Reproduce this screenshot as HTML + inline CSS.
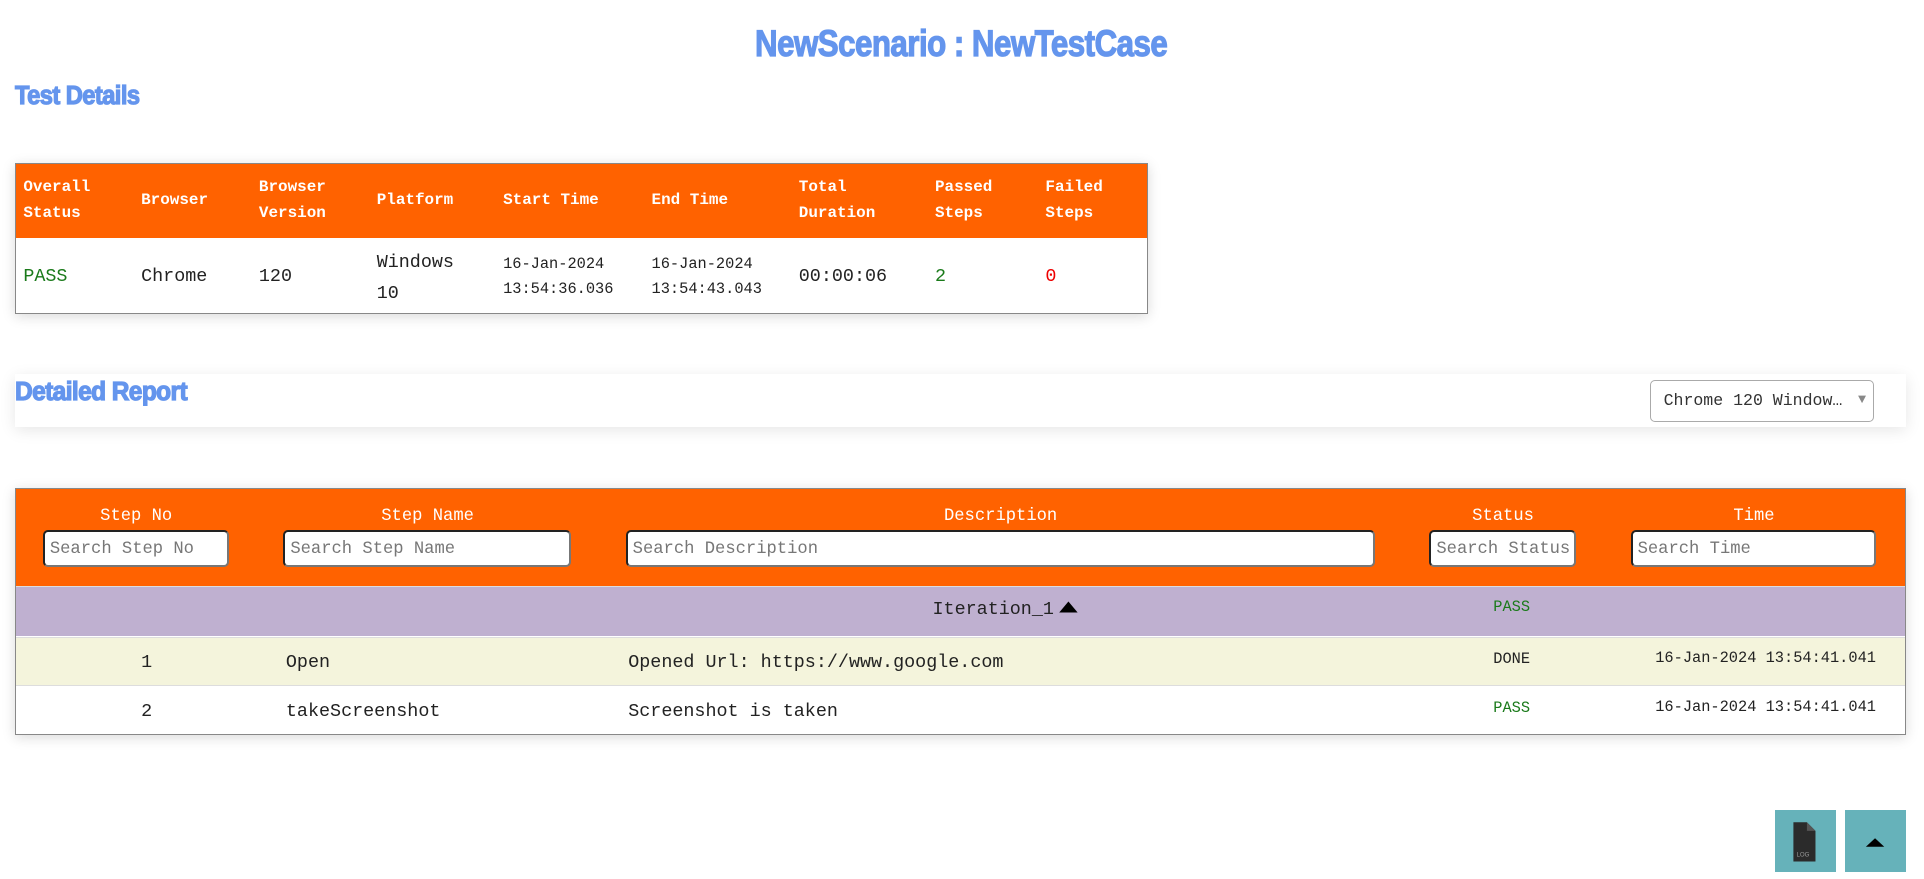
<!DOCTYPE html>
<html><head><meta charset="utf-8"><style>
html,body{margin:0;padding:0;background:#fff;overflow:hidden}
body{width:1924px;height:879px}
#w{zoom:1.2270;width:1568px;height:716px;position:relative;font-family:"Liberation Mono",monospace;color:#222}
.a{position:absolute;white-space:nowrap}
.h{font-family:"Liberation Sans",sans-serif;font-weight:bold;color:#6495ED;transform-origin:left top;letter-spacing:-0.5px;-webkit-text-stroke:1px #6495ED}
.or{background:#FF6200}
.th{color:#fff;font-weight:bold;font-size:13px;line-height:21px}
.td{font-size:15px}
.sm{font-size:12.5px;line-height:21px}
.inp{position:absolute;top:432px;height:27px;background:#fff;border:2px solid #222;border-right-color:#777;border-bottom-color:#777;border-radius:4px;font-size:14px;color:#777;line-height:29px;padding-left:4px;box-sizing:content-box}
.lbl{position:absolute;top:413px;color:#fff;font-size:14px;text-align:center}
.btn{position:absolute;top:660px;width:49px;height:51px;background:#66B2BA}
</style></head><body><div id="w">
<div class="a h" style="left:615px;top:19px;font-size:30px;transform:scaleX(0.85)">NewScenario : NewTestCase</div>
<div class="a h" style="left:12px;top:67px;font-size:21px;transform:scaleX(0.92)">Test Details</div>

<div class="a" style="left:12px;top:133px;width:922px;height:121px;border:1px solid #888;box-shadow:0 2px 10px rgba(0,0,0,.15)">
 <div class="or" style="position:absolute;left:0;top:0;width:922px;height:60px"></div>
</div>
<div class="a th" style="left:19px;top:143px">Overall<br>Status</div>
<div class="a th" style="left:115px;top:153px">Browser</div>
<div class="a th" style="left:211px;top:143px">Browser<br>Version</div>
<div class="a th" style="left:307px;top:153px">Platform</div>
<div class="a th" style="left:410px;top:153px">Start Time</div>
<div class="a th" style="left:531px;top:153px">End Time</div>
<div class="a th" style="left:651px;top:143px">Total<br>Duration</div>
<div class="a th" style="left:762px;top:143px">Passed<br>Steps</div>
<div class="a th" style="left:852px;top:143px">Failed<br>Steps</div>
<div class="a td" style="left:19px;top:217px;color:#1a7a1a">PASS</div>
<div class="a td" style="left:115px;top:217px">Chrome</div>
<div class="a td" style="left:211px;top:217px">120</div>
<div class="a td" style="left:307px;top:202px;line-height:25px">Windows<br>10</div>
<div class="a sm" style="left:410px;top:205px">16-Jan-2024<br>13:54:36.036</div>
<div class="a sm" style="left:531px;top:205px">16-Jan-2024<br>13:54:43.043</div>
<div class="a td" style="left:651px;top:217px">00:00:06</div>
<div class="a td" style="left:762px;top:217px;color:#1a7a1a">2</div>
<div class="a td" style="left:852px;top:217px;color:#e00">0</div>

<div class="a" style="left:12px;top:305px;width:1541px;height:43px;background:#fff;box-shadow:0 3px 12px rgba(0,0,0,.1)"></div>
<div class="a h" style="left:12px;top:308px;font-size:21px;transform:scaleX(0.95)">Detailed Report</div>
<div class="a" style="left:1345px;top:310px;width:181px;height:32px;border:1px solid #aaa;border-radius:4px;background:#fff;font-size:13.5px;line-height:32px;color:#333"><span style="margin-left:10px">Chrome 120 Window…</span><span style="position:absolute;right:6px;top:0;color:#888;font-size:11px">▼</span></div>

<div class="a" style="left:12px;top:398px;width:1540px;height:199px;border:1px solid #888;box-shadow:0 2px 10px rgba(0,0,0,.15)">
 <div class="or" style="position:absolute;left:0;top:0;width:1540px;height:79px"></div>
 <div style="position:absolute;left:0;top:79px;width:1540px;height:40px;background:#BFB0D0;border-top:1px solid #ddd"></div>
 <div style="position:absolute;left:0;top:120px;width:1540px;height:39px;background:#F4F4DC;border-top:1px solid #ddd;border-bottom:1px solid #ddd"></div>
</div>
<div class="lbl" style="left:36px;width:150px">Step No</div>
<div class="lbl" style="left:232px;width:233px">Step Name</div>
<div class="lbl" style="left:511px;width:609px">Description</div>
<div class="lbl" style="left:1166px;width:118px">Status</div>
<div class="lbl" style="left:1330px;width:199px">Time</div>
<div class="inp" style="left:35px;width:144px">Search Step No</div>
<div class="inp" style="left:231px;width:227px">Search Step Name</div>
<div class="inp" style="left:510px;width:603px">Search Description</div>
<div class="inp" style="left:1165px;width:112px">Search Status</div>
<div class="inp" style="left:1329px;width:193px">Search Time</div>

<div class="a" style="left:760px;top:488px;font-size:15px">Iteration_1<svg width="17" height="12" viewBox="0 0 17 12" style="margin-left:3px"><path d="M1 11L8.5 2 16 11z" fill="#000"/></svg></div>
<div class="a" style="left:1217px;top:487px;font-size:12.5px;color:#1a7a1a">PASS</div>
<div class="a td" style="left:115px;top:531px">1</div>
<div class="a td" style="left:233px;top:531px">Open</div>
<div class="a td" style="left:512px;top:531px">Opened Url: https://www.google.com</div>
<div class="a" style="left:1217px;top:530px;font-size:12.5px">DONE</div>
<div class="a" style="left:1349px;top:529px;font-size:12.5px">16-Jan-2024 13:54:41.041</div>
<div class="a td" style="left:115px;top:571px">2</div>
<div class="a td" style="left:233px;top:571px">takeScreenshot</div>
<div class="a td" style="left:512px;top:571px">Screenshot is taken</div>
<div class="a" style="left:1217px;top:570px;font-size:12.5px;color:#1a7a1a">PASS</div>
<div class="a" style="left:1349px;top:569px;font-size:12.5px">16-Jan-2024 13:54:41.041</div>

<div class="btn" style="left:1447px"><svg width="49" height="51" viewBox="0 0 49 51"><path d="M15 10h11l7 7v25h-18z" fill="#2b2b2b"/><path d="M26 10l7 7h-7z" fill="#555"/><text x="17.5" y="38" font-size="5" fill="#999" font-family="Liberation Sans">LOG</text></svg></div>
<div class="btn" style="left:1504px"><svg width="49" height="51" viewBox="0 0 49 51"><path d="M17 30l7.5-7 7.5 7z" fill="#000"/></svg></div>
</div></body></html>
